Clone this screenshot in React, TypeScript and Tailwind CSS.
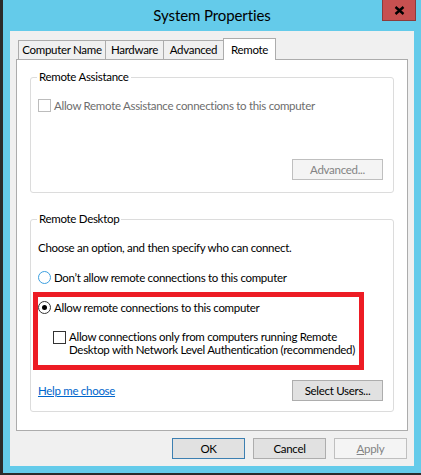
import React from "react";

function Checkbox({ disabled }: { disabled?: boolean }) {
  return (
    <span
      className={
        "inline-block w-[13px] h-[13px] shrink-0 bg-white border " +
        (disabled ? "border-[#bcbcbc]" : "border-[#333333]")
      }
    />
  );
}

function Radio({ checked, focused }: { checked?: boolean; focused?: boolean }) {
  return (
    <span
      className={
        "inline-flex items-center justify-center w-[13px] h-[13px] shrink-0 rounded-full bg-white border " +
        (focused ? "border-[#3c9fe0]" : "border-[#333333]")
      }
    >
      {checked && <span className="block w-[5px] h-[5px] rounded-full bg-[#000]" />}
    </span>
  );
}

function Btn({
  children,
  w = "w-[73px]",
  disabled,
  isDefault,
}: {
  children: React.ReactNode;
  w?: string;
  disabled?: boolean;
  isDefault?: boolean;
}) {
  const cls = disabled
    ? "bg-[#f4f4f4] border-[#bfbfbf] text-[#838383]"
    : isDefault
    ? "bg-[#e1e1e1] border-[#3c7fb1] text-black"
    : "bg-[#e1e1e1] border-[#adadad] text-black";
  return (
    <div className={"h-[21px] border flex items-center justify-center leading-none " + w + " " + cls}>
      {children}
    </div>
  );
}

export default function App() {
  return (
    <div className="relative w-[421px] h-[475px] bg-[#2b2b2b] flex text-[11.5px] tracking-[-0.3px] text-black font-['Lato',sans-serif] whitespace-nowrap">
      <div className="ml-[3px] w-[418px] h-[473px] bg-[#64cbea] relative flex flex-col">
        {/* title bar */}
        <div className="h-[31px] flex items-center justify-center text-[15px] tracking-[-0.1px] text-[#000] pb-[1px]">
          System Properties
        </div>
        <div className="absolute right-[5px] top-0 w-[34px] h-[21px] bg-[#c75050] border border-[#8d3b3b] border-t-0 flex items-center justify-center">
          <svg width="11" height="9" viewBox="0 0 11 9">
            <path d="M1.5 1 L9.5 8 M9.5 1 L1.5 8" stroke="#000" strokeWidth="2.4" />
          </svg>
        </div>

        {/* body */}
        <div className="mx-[7px] mb-[7px] flex-1 bg-[#f0f0f0] flex flex-col px-[6px] pt-[7px]">
          {/* tabs */}
          <div className="flex items-end h-[21px] pl-[2px] relative z-10">
            <div className="w-[88px] h-[19px] border border-b-0 border-[#acacac] bg-[#f0f0f0] flex items-center justify-center">
              Computer Name
            </div>
            <div className="w-[58px] h-[19px] border border-l-0 border-b-0 border-[#acacac] bg-[#f0f0f0] flex items-center justify-center">
              Hardware
            </div>
            <div className="w-[60px] h-[19px] border border-l-0 border-b-0 border-[#acacac] bg-[#f0f0f0] flex items-center justify-center">
              Advanced
            </div>
            <div className="w-[53px] h-[22px] -mb-[1px] -ml-[1px] border border-b-0 border-[#acacac] bg-white flex items-start justify-center pt-[2px]">
              Remote
            </div>
          </div>

          {/* panel */}
          <div className="h-[372px] border border-[#acacac] bg-white px-[13px] pt-[17px]">
            {/* Remote Assistance group */}
            <div className="relative h-[116px] border border-[#dcdcdc] rounded-[3px] flex flex-col pt-[21px] pl-[7px] pr-[10px] pb-[12px]">
              <div className="absolute -top-[9px] left-[6px] bg-white px-[2px] leading-[16px]">Remote Assistance</div>
              <div className="flex items-center gap-[3px] text-[#6d6d6d] leading-[13px]">
                <Checkbox disabled />
                <span>Allow Remote Assistance connections to this computer</span>
              </div>
              <div className="mt-auto flex justify-end">
                <Btn w="w-[91px]" disabled>
                  Advanced...
                </Btn>
              </div>
            </div>

            {/* Remote Desktop group */}
            <div className="relative mt-[26px] h-[193px] border border-[#dcdcdc] rounded-[3px] flex flex-col pt-[20px] pl-[7px] pr-[10px]">
              <div className="absolute -top-[9px] left-[6px] bg-white px-[2px] leading-[16px]">Remote Desktop</div>
              <div className="leading-[15px]">Choose an option, and then specify who can connect.</div>
              <div className="mt-[15px] h-[15px] flex items-center gap-[3px]">
                <Radio focused />
                <span>Don’t allow remote connections to this computer</span>
              </div>
              <div className="mt-[15px] h-[15px] flex items-center gap-[3px]">
                <Radio checked />
                <span>Allow remote connections to this computer</span>
              </div>
              <div className="mt-[15px] flex items-start gap-[3px] pl-[15px] leading-[13px]">
                <span className="pt-[1px]">
                  <Checkbox />
                </span>
                <span>
                  Allow connections only from computers running Remote
                  <br />
                  Desktop with Network Level Authentication (recommended)
                </span>
              </div>
              <div className="mt-[24px] flex items-center justify-between">
                <span className="text-[#0066cc] underline">Help me choose</span>
                <Btn w="w-[91px]">Select Users...</Btn>
              </div>
            </div>
          </div>

          {/* bottom buttons */}
          <div className="mt-[7px] flex justify-end gap-[8px] pr-[1px]">
            <Btn isDefault>OK</Btn>
            <Btn>Cancel</Btn>
            <Btn disabled>
              <span>
                <span className="underline">A</span>pply
              </span>
            </Btn>
          </div>
        </div>
      </div>

      {/* red annotation box */}
      <div className="absolute left-[33px] top-[292px] w-[331px] h-[78px] border-[5px] border-[#ed1c24] pointer-events-none" />
    </div>
  );
}
